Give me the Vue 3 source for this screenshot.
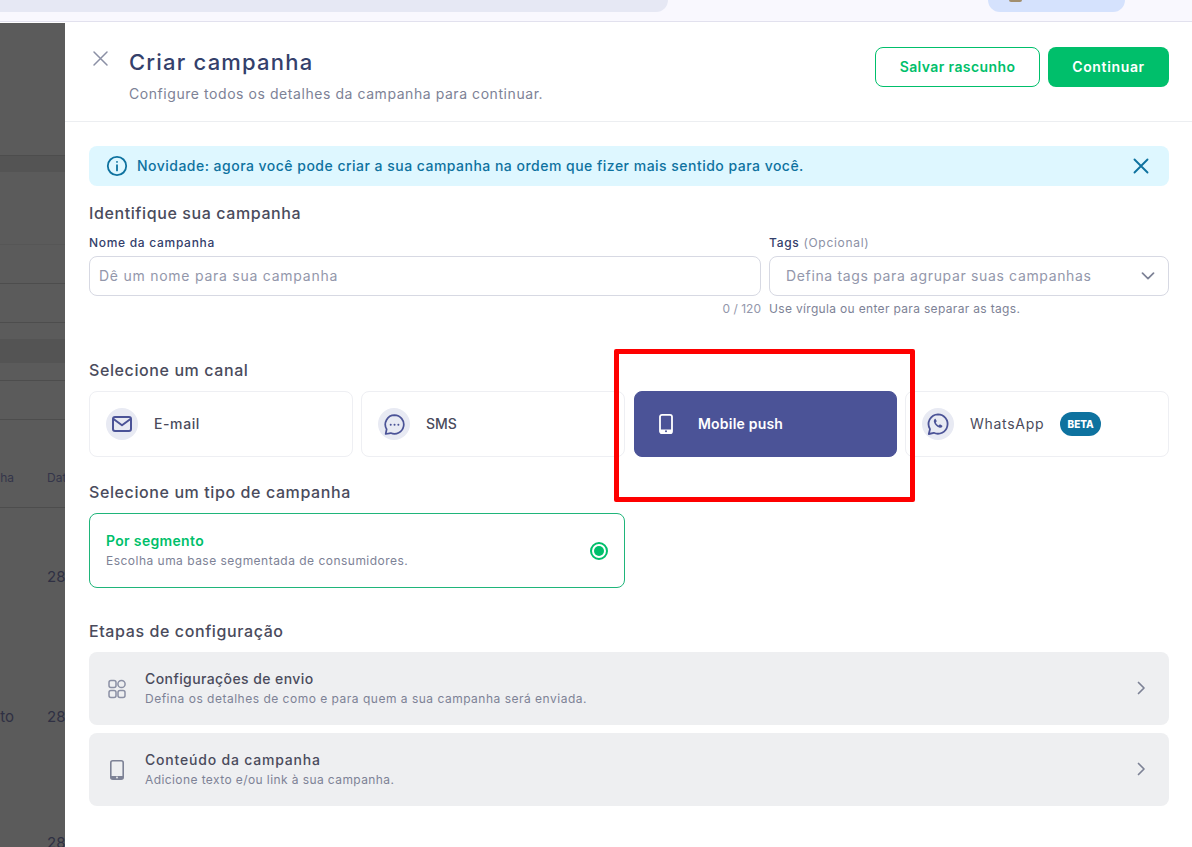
<template>
  <div class="page">
    <header class="topbar">
      <div class="search"></div>
      <div class="avatar-pill"><span class="avatar"></span></div>
    </header>

    <div class="body">
      <aside class="backdrop">
        <div class="bg-row" style="height: 133px"></div>
        <div class="bg-row band no-line" style="height: 16px"></div>
        <div class="bg-row faint" style="height: 73px"></div>
        <div class="bg-row" style="height: 39px"></div>
        <div class="bg-row" style="height: 39px"></div>
        <div class="bg-row no-line" style="height: 16px"></div>
        <div class="bg-row band no-line" style="height: 24px"></div>
        <div class="bg-row" style="height: 18px"></div>
        <div class="bg-row" style="height: 39px"></div>
        <div class="bg-row head" style="height: 88px">
          <span class="c1">nha</span><span>Data</span>
        </div>
        <div class="bg-row cell" style="height: 140px"><span class="c1"></span><span>28/</span></div>
        <div class="bg-row cell" style="height: 140px"><span class="c1">nto</span><span>28/</span></div>
        <div class="bg-row cell last"><span class="c1"></span><span>28/</span></div>
      </aside>

      <main class="drawer">
        <div class="drawer-head">
          <button class="close">
            <svg width="20" height="20" viewBox="0 0 20 20" fill="none" stroke="#8b90a5" stroke-width="1.5" stroke-linecap="round">
              <path d="M3 3 16 16M16 3 3 16" />
            </svg>
          </button>
          <div class="head-text">
            <h1>Criar campanha</h1>
            <p>Configure todos os detalhes da campanha para continuar.</p>
          </div>
          <div class="actions">
            <button class="btn outline">Salvar rascunho</button>
            <button class="btn solid">Continuar</button>
          </div>
        </div>

        <div class="content">
          <div class="notice">
            <svg class="notice-i" width="22" height="22" viewBox="0 0 22 22" fill="none" stroke="#0e729f" stroke-width="1.8" stroke-linecap="round">
              <circle cx="11" cy="11" r="9.2" />
              <path d="M11 10.2V15.4M11 6.8V6.9" />
            </svg>
            <span>Novidade: agora você pode criar a sua campanha na ordem que fizer mais sentido para você.</span>
            <svg class="notice-x" width="18" height="18" viewBox="0 0 18 18" fill="none" stroke="#0e729f" stroke-width="1.9" stroke-linecap="round">
              <path d="M2.5 2.5 15.5 15.5M15.5 2.5 2.5 15.5" />
            </svg>
          </div>

          <h2 class="sec first">Identifique sua campanha</h2>
          <div class="fields">
            <div class="field">
              <label>Nome da campanha</label>
              <div class="input name">Dê um nome para sua campanha</div>
              <div class="count">0 / 120</div>
            </div>
            <div class="field">
              <label>Tags <em>(Opcional)</em></label>
              <div class="input tags">
                <span>Defina tags para agrupar suas campanhas</span>
                <svg width="14" height="8" viewBox="0 0 14 8" fill="none" stroke="#7d8296" stroke-width="1.7" stroke-linecap="round" stroke-linejoin="round">
                  <path d="M1.5 1.2 7 6.6 12.5 1.2" />
                </svg>
              </div>
              <div class="hint">Use vírgula ou enter para separar as tags.</div>
            </div>
          </div>

          <h2 class="sec canal">Selecione um canal</h2>
          <div class="channels">
            <div
              v-for="c in channels"
              :key="c.name"
              class="channel"
              :class="{ active: c.active, wa: c.name === 'WhatsApp', mail: c.name === 'E-mail' }"
            >
              <span class="ch-icon">
                <svg v-if="c.name === 'E-mail'" width="22" height="22" viewBox="0 0 22 22" fill="none" stroke="#4b5397" stroke-width="2" stroke-linejoin="round" stroke-linecap="round">
                  <rect x="2" y="4" width="18" height="14" rx="2" />
                  <path d="M2.5 6 11 12.2 19.5 6" />
                </svg>
                <svg v-else-if="c.name === 'SMS'" width="23" height="23" viewBox="0 0 24 24" fill="none" stroke="#4b5397" stroke-width="1.8" stroke-linejoin="round">
                  <path d="M12 2.3a9.7 9.7 0 1 1-3.9 18.6l-5.3 1 1-4.9A9.7 9.7 0 0 1 12 2.3Z" />
                  <path d="M8 12.2h.1M12 12.2h.1M16 12.2h.1" stroke-linecap="round" stroke-width="2" />
                </svg>
                <svg v-else-if="c.name === 'Mobile push'" width="16" height="22" viewBox="0 0 16 22" fill="none">
                  <rect x="2" y="1.8" width="12" height="18.4" rx="2" stroke="#fff" stroke-width="1.8" />
                  <rect x="2" y="16.5" width="12" height="3.7" fill="#fff" />
                  <circle cx="8" cy="18.3" r="1" fill="#4b5397" />
                </svg>
                <svg v-else width="24" height="24" viewBox="0 0 24 24" fill="none" stroke="#4b5397" stroke-width="1.8" stroke-linejoin="round">
                  <path d="M12 2.3a9.7 9.7 0 1 1-4.2 18.5l-5 1.2 1.2-4.9A9.7 9.7 0 0 1 12 2.3Z" />
                  <path d="M8.6 7.5c-.8.7-1 1.8-.5 3 .9 2.4 2.6 4 5 5 1.3.5 2.3.2 3-.6.4-.5.3-1-.1-1.3l-1.6-1c-.4-.2-.8-.2-1.1.2l-.5.6c-1.4-.5-2.5-1.6-3-3l.6-.6c.3-.3.4-.7.2-1.1l-.9-1.500c-.3-.5-.9-.5-1.6.3Z" fill="#4b5397" stroke="none" />
                </svg>
              </span>
              <span class="ch-name">{{ c.name }}</span>
              <span v-if="c.beta" class="beta">BETA</span>
            </div>
          </div>

          <h2 class="sec tipo">Selecione um tipo de campanha</h2>
          <div class="types">
            <div class="type">
              <div class="type-text">
                <strong>Por segmento</strong>
                <p>Escolha uma base segmentada de consumidores.</p>
              </div>
              <span class="radio"><i></i></span>
            </div>
          </div>

          <h2 class="sec etapas">Etapas de configuração</h2>
          <div class="steps">
            <div class="step">
              <svg width="20" height="22" viewBox="0 0 20 22" fill="none" stroke="#8b90a5" stroke-width="1.5" stroke-linejoin="round">
                <rect x="2" y="2.5" width="7" height="7" rx="2" />
                <circle cx="14.5" cy="6" r="3.6" />
                <rect x="2" y="12.5" width="7" height="7" rx="2" />
                <rect x="11" y="12.5" width="7" height="7" rx="2" />
              </svg>
              <div class="step-text">
                <strong>Configurações de envio</strong>
                <p>Defina os detalhes de como e para quem a sua campanha será enviada.</p>
              </div>
              <svg class="chev" width="9" height="14" viewBox="0 0 9 14" fill="none" stroke="#7d8296" stroke-width="1.7" stroke-linecap="round" stroke-linejoin="round">
                <path d="M1.5 1.5 7 7 1.5 12.5" />
              </svg>
            </div>
            <div class="step second">
              <svg width="20" height="22" viewBox="0 0 20 22" fill="none">
                <rect x="3.8" y="1.8" width="12.4" height="18.4" rx="2" stroke="#7d8296" stroke-width="1.6" />
                <rect x="4" y="17" width="12" height="3" fill="#7d8296" />
                <circle cx="10" cy="18.5" r=".9" fill="#eeeff1" />
              </svg>
              <div class="step-text">
                <strong>Conteúdo da campanha</strong>
                <p>Adicione texto e/ou link à sua campanha.</p>
              </div>
              <svg class="chev" width="9" height="14" viewBox="0 0 9 14" fill="none" stroke="#7d8296" stroke-width="1.7" stroke-linecap="round" stroke-linejoin="round">
                <path d="M1.5 1.5 7 7 1.5 12.5" />
              </svg>
            </div>
          </div>
        </div>
      </main>
    </div>

    <div class="highlight"></div>
  </div>
</template>

<script setup>
const channels = [
  { name: 'E-mail' },
  { name: 'SMS' },
  { name: 'Mobile push', active: true },
  { name: 'WhatsApp', beta: true },
]
</script>

<style>
html,
body {
  margin: 0;
  background: #fff;
}
</style>

<style scoped>
.page {
  position: relative;
  width: 1192px;
  height: 847px;
  overflow: hidden;
  font-family: Inter, 'Noto Sans', sans-serif;
  background: #fff;
}
.topbar {
  height: 21px;
  background: #f9f8fe;
  border-bottom: 1px solid #e2e1ee;
  display: flex;
  justify-content: space-between;
  align-items: flex-start;
  padding-right: 67px;
}
.search {
  width: 668px;
  height: 12px;
  background: #e6e8f4;
  border-bottom-right-radius: 18px;
}
.avatar-pill {
  width: 137px;
  height: 12px;
  background: #d5e2fd;
  border-radius: 0 0 20px 20px;
  padding-left: 21px;
  box-sizing: border-box;
}
.avatar {
  display: block;
  width: 13px;
  height: 2px;
  background: #a28f6f;
  border-radius: 0 0 8px 8px;
}
.body {
  display: flex;
  height: 825px;
}
.backdrop {
  width: 65px;
  flex-shrink: 0;
  margin-top: 1px;
  background: #5b5b5b;
  overflow: hidden;
  color: #2f3043;
}
.bg-row {
  box-sizing: border-box;
  border-bottom: 1px solid #4d4d4d;
  display: flex;
  align-items: flex-start;
  width: 90px;
  white-space: nowrap;
}
.bg-row.no-line {
  border-bottom: 0;
}
.bg-row.faint {
  border-bottom-color: #565656;
}
.band {
  background: #545454;
}
.head {
  font-size: 12px;
  line-height: 16px;
  color: #34354a;
  padding-top: 50px;
}
.cell {
  border-bottom: 0;
  font-size: 15px;
  line-height: 20px;
  padding-top: 59px;
}
.cell.last {
  padding-top: 45px;
}
.c1 {
  width: 14px;
  margin-right: 33px;
  flex-shrink: 0;
  display: flex;
  justify-content: flex-end;
}
.drawer {
  flex: 1;
  background: #fff;
  border-top-left-radius: 8px;
  min-width: 0;
}
.drawer-head {
  height: 100px;
  box-sizing: border-box;
  border-bottom: 1px solid #eceef1;
  display: flex;
  align-items: flex-start;
  padding: 25px 23px 0 26px;
}
.close {
  all: unset;
  display: block;
  width: 20px;
  height: 20px;
  margin-top: 2px;
}
.head-text {
  margin-left: 18px;
  flex: 1;
}
h1 {
  margin: 0;
  font-size: 22px;
  line-height: 30px;
  font-weight: 500;
  letter-spacing: 1.2px;
  color: #34406b;
}
.head-text p {
  margin: 7px 0 0;
  font-size: 14px;
  line-height: 20px;
  letter-spacing: 0.56px;
  color: #7d8296;
}
.actions {
  display: flex;
  gap: 8px;
}
.btn {
  all: unset;
  box-sizing: border-box;
  height: 40px;
  border-radius: 8px;
  font-size: 14px;
  font-weight: 600;
  padding-bottom: 1px;
  display: flex;
  align-items: center;
  justify-content: center;
}
.outline {
  width: 165px;
  border: 1px solid #00bf6b;
  color: #00bf6b;
  letter-spacing: 0.4px;
}
.solid {
  width: 121px;
  background: #00bf6b;
  color: #fff;
  letter-spacing: 0.66px;
}
.content {
  padding: 24px 23px 0 24px;
}
.notice {
  height: 40px;
  background: #def7ff;
  border-radius: 8px;
  display: flex;
  align-items: center;
  padding: 0 19px 0 17px;
  color: #0e729f;
  font-size: 14px;
  font-weight: 500;
  letter-spacing: 0.48px;
}
.notice span {
  margin-left: 9px;
  flex: 1;
  padding-bottom: 2px;
}
.sec {
  margin: 0;
  font-size: 16px;
  line-height: 24px;
  font-weight: 500;
  color: #4a4b5c;
  letter-spacing: 0.6px;
}
.sec.first {
  margin-top: 15px;
}
.fields {
  display: flex;
  gap: 8px;
  margin-top: 10px;
}
.field {
  flex: 1;
  min-width: 0;
}
.field:first-child {
  flex: none;
  width: 672px;
}
label {
  display: block;
  font-size: 12px;
  line-height: 16px;
  font-weight: 500;
  letter-spacing: 0.7px;
  color: #34406b;
}
label em {
  font-style: normal;
  font-weight: 400;
  color: #8b90a5;
}
.input {
  box-sizing: border-box;
  height: 40px;
  margin-top: 5px;
  border: 1px solid #d7d9e3;
  border-radius: 8px;
  display: flex;
  align-items: center;
  padding: 0 9px 2px;
  font-size: 14px;
  color: #9397ab;
}
.input.name {
  letter-spacing: 0.75px;
}
.tags {
  padding: 0 13px 2px 16px;
  justify-content: space-between;
  letter-spacing: 0.65px;
}
.tags svg {
  margin-top: 2px;
}
.count,
.hint {
  font-size: 12px;
  line-height: 16px;
  margin-top: 5px;
}
.count {
  text-align: right;
  color: #9397ab;
}
.hint {
  color: #7d8296;
  letter-spacing: 0.33px;
}
.sec.canal {
  margin-top: 41px;
}
.channels {
  display: grid;
  grid-template-columns: repeat(4, 264px);
  gap: 8px;
  margin-top: 9px;
}
.channel {
  box-sizing: border-box;
  height: 66px;
  border: 1px solid #eeeff3;
  border-radius: 8px;
  display: flex;
  align-items: center;
  padding: 0 16px;
  gap: 16px;
  font-size: 14px;
  font-weight: 500;
  color: #4a4b5c;
}
.ch-name {
  padding-bottom: 2px;
}
.channel.mail {
  letter-spacing: 0.6px;
}
.ch-icon {
  width: 32px;
  height: 32px;
  border-radius: 50%;
  background: #e8eaf3;
  display: flex;
  align-items: center;
  justify-content: center;
  flex-shrink: 0;
}
.channel.active {
  margin-left: 1px;
  padding-left: 15px;
  background: #4b5397;
  border-color: #4b5397;
  color: #fff;
  font-weight: 600;
  letter-spacing: 0.2px;
}
.channel.active .ch-icon {
  background: transparent;
}
.channel.wa {
  letter-spacing: 0.7px;
}
.channel.wa .ch-name {
  font-weight: 400;
}
.beta {
  background: #0e729f;
  color: #fff;
  font-size: 10px;
  font-weight: 800;
  letter-spacing: 0;
  height: 24px;
  width: 41px;
  border-radius: 12px;
  display: flex;
  align-items: center;
  justify-content: center;
}
.sec.tipo {
  margin-top: 23px;
}
.types {
  margin-top: 9px;
  width: 536px;
}
.type {
  box-sizing: border-box;
  height: 75px;
  border: 1px solid #1fb57a;
  border-radius: 8px;
  display: flex;
  align-items: center;
  justify-content: space-between;
  padding: 0 16px;
}
.type-text {
  padding-bottom: 1px;
}
.type strong {
  display: block;
  font-size: 14px;
  line-height: 20px;
  font-weight: 600;
  letter-spacing: 0.33px;
  color: #00bf6b;
}
.type p {
  margin: 2px 0 0;
  font-size: 12px;
  line-height: 16px;
  letter-spacing: 0.48px;
  color: #7d8296;
}
.radio {
  width: 18px;
  height: 18px;
  box-sizing: border-box;
  border: 2px solid #00bf6b;
  border-radius: 50%;
  display: flex;
  align-items: center;
  justify-content: center;
}
.radio i {
  width: 10px;
  height: 10px;
  border-radius: 50%;
  background: #00bf6b;
}
.sec.etapas {
  margin-top: 31px;
}
.steps {
  display: flex;
  flex-direction: column;
  gap: 8px;
  margin-top: 9px;
}
.step {
  box-sizing: border-box;
  height: 73px;
  background: #eeeff1;
  border-radius: 8px;
  display: flex;
  align-items: center;
  padding: 0 23px 0 18px;
}
.step-text {
  flex: 1;
  margin-left: 18px;
  padding-bottom: 2px;
}
.chev {
  margin-bottom: 2px;
}
.step strong {
  display: block;
  font-size: 14px;
  line-height: 20px;
  font-weight: 500;
  letter-spacing: 0.41px;
  color: #4a4b5c;
}
.step p {
  margin: 2px 0 0;
  font-size: 12px;
  line-height: 16px;
  letter-spacing: 0.5px;
  color: #7d8296;
}
.step.second strong {
  letter-spacing: 0.8px;
}
.step.second p {
  letter-spacing: 0.41px;
}
.highlight {
  position: absolute;
  left: 614px;
  top: 349px;
  width: 301px;
  height: 153px;
  box-sizing: border-box;
  border: 5px solid #fe0000;
  border-radius: 2px;
}
</style>
